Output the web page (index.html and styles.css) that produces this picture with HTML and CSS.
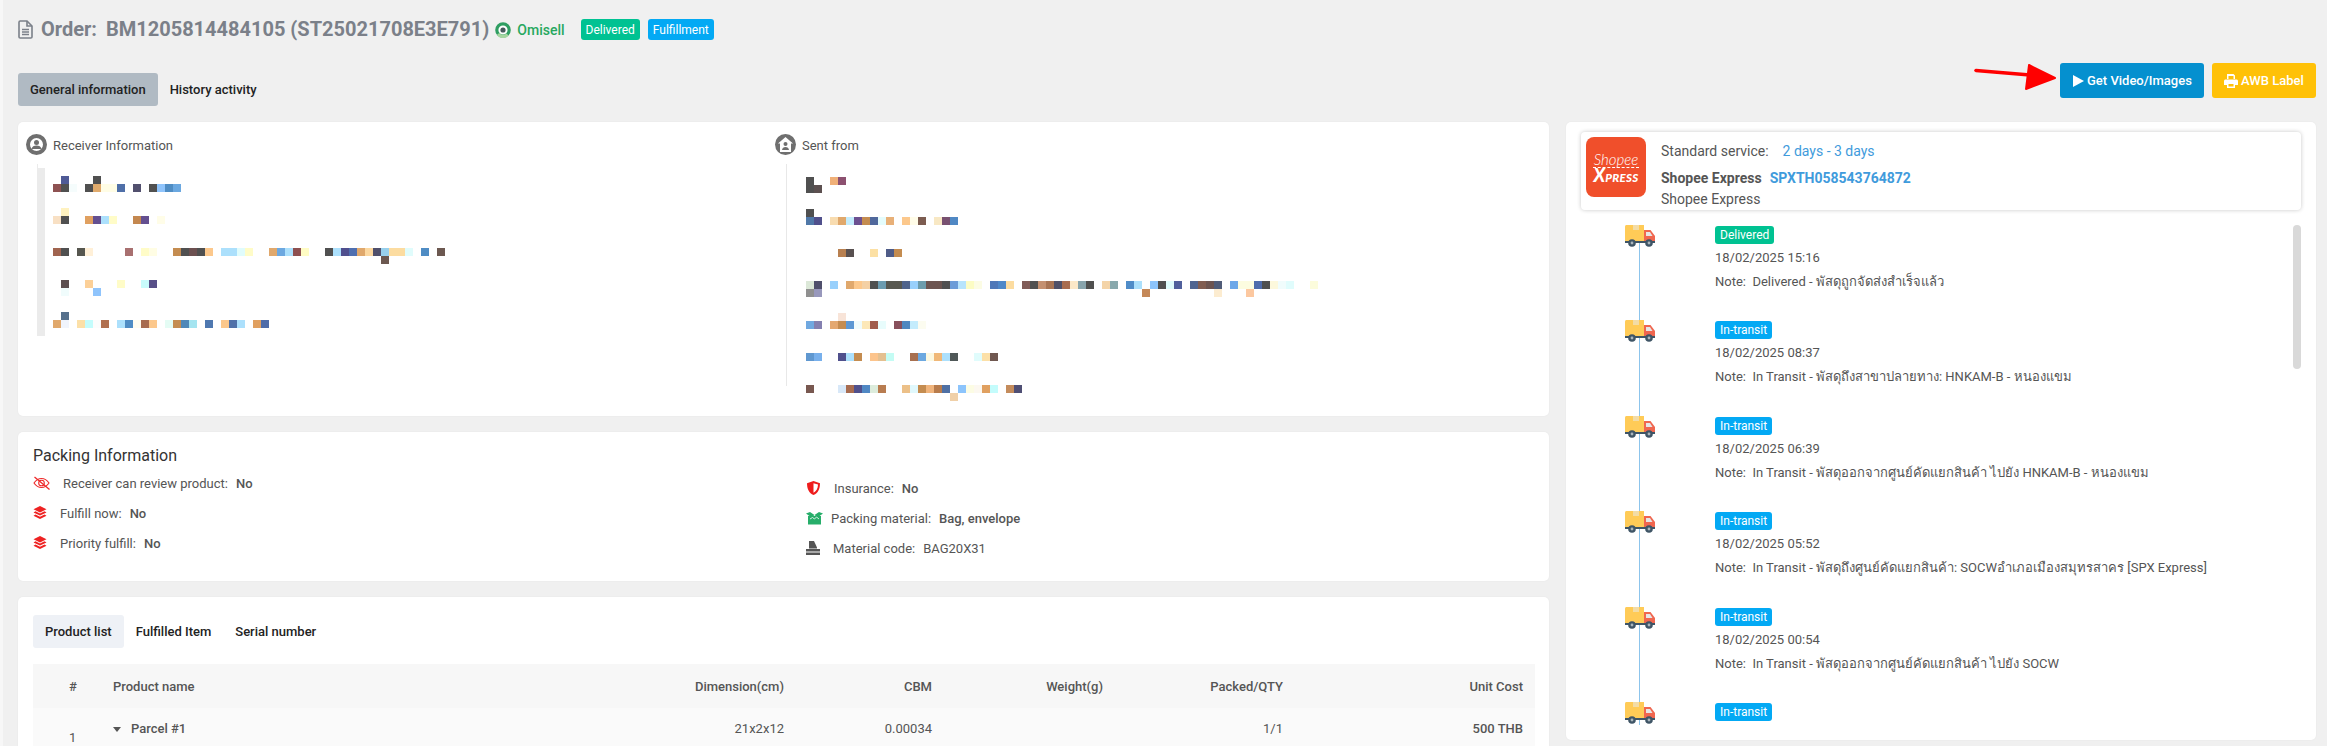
FILE: index.html
```html
<!DOCTYPE html>
<html lang="en">
<head>
<meta charset="utf-8">
<title>Order BM1205814484105</title>
<link rel="stylesheet" href="styles.css">
</head>
<body>
<main class="page">
  <header class="title-row">
    <svg class="doc-icon" viewBox="0 0 15 19"><path fill="none" stroke="#7b8089" stroke-width="1.6" d="M1 2.2C1 1.5 1.5 1 2.2 1H9l5 5v11c0 .6-.5 1-1.2 1H2.2C1.500 18 1 17.600 1 17z"/><path fill="none" stroke="#7b8089" stroke-width="1.600" d="M9 1v5h5M4 9.500h7M4 12h7M4 14.500h7"/></svg>
    <h1 class="order"><span class="order-label">Order:</span><span>BM1205814484105 (ST25021708E3E791)</span></h1>
    <svg class="omisell-logo" viewBox="0 0 16 16"><circle cx="8" cy="8" r="6.200" fill="#fff" stroke="#2f9e62" stroke-width="3.200"/><path fill="none" stroke="#a5d6a0" stroke-width="3.200" d="M3 12a6.200 6.200 0 0 0 9.500.5"/><circle cx="8" cy="8" r="2.600" fill="#46595c"/></svg>
    <span class="omisell">Omisell</span>
    <span class="badge green title-badge">Delivered</span>
    <span class="badge blue title-badge">Fulfillment</span>
  </header>

  <div class="toolbar">
    <nav class="tabs">
      <span class="tab active-main">General information</span>
      <span class="tab">History activity</span>
    </nav>
    <div class="actions">
      <svg class="arrow" viewBox="0 0 82 30"><path fill="none" stroke="#f00" stroke-width="3.500" stroke-linecap="round" d="M2 6.500 56 11"/><path fill="#f00" stroke="#f00" stroke-width="2" stroke-linejoin="round" d="M55 1 81 14 52 25z"/></svg>
      <button class="btn btn-blue"><svg class="btn-icon" viewBox="0 0 11 12"><path fill="#fff" d="M0 0l11 6-11 6z"/></svg>Get Video/Images</button>
      <button class="btn btn-yellow"><svg class="btn-icon printer" viewBox="0 0 14 14"><path fill="#fff" d="M3 0h6.500L11 1.500V5H9.500V2H4.500v3H3zM1.500 5.500h11c.8 0 1.500.7 1.500 1.500v4h-3v3H3v-3H0V7c0-.8.7-1.500 1.500-1.500zM4.500 10v2.500h5V10z"/></svg>AWB Label</button>
    </div>
  </div>

  <div class="columns">
    <section class="left">
      <article class="card addresses">
        <div class="address">
          <div class="addr-head">
            <svg class="addr-icon" viewBox="0 0 21 21"><circle cx="10.500" cy="10.500" r="8.500" fill="#fff" stroke="#6f6f6f" stroke-width="4"/><circle cx="10.500" cy="8.500" r="2.500" fill="#6f6f6f"/><path fill="#6f6f6f" d="M5.500 15c.5-2.500 2.500-3.500 5-3.500s4.500 1 5 3.500z"/></svg>
            <span>Receiver Information</span>
          </div>
          <svg class="mosaic receiver" viewBox="0 0 410 172">
            <path fill="#ebebeb" d="M0 0h1v4h7v168H0z"/>
            <g transform="translate(16 12)">
              <rect x="8" fill="#4f5a96"/><rect x="40" fill="#505050"/>
              <rect y="8" fill="#8e5252"/><rect x="8" y="8" fill="#505050"/><rect x="16" y="8" fill="#f5fcfc"/><rect x="32" y="8" fill="#505050"/><rect x="40" y="8" fill="#e0aa6c"/><rect x="48" y="8" fill="#fffde5"/><rect x="56" y="8" fill="#fffde5"/><rect x="64" y="8" fill="#4f6fa8"/><rect x="80" y="8" fill="#52506e"/><rect x="96" y="8" fill="#505050"/><rect x="104" y="8" fill="#8fc4fc"/><rect x="112" y="8" fill="#4f8dc4"/><rect x="120" y="8" fill="#6ba8e0"/>
              <rect x="8" y="32" fill="#fff2c0"/>
              <rect y="40" fill="#f8e0c4"/><rect x="8" y="40" fill="#505050"/><rect x="32" y="40" fill="#e0a060"/><rect x="40" y="40" fill="#644f90"/><rect x="48" y="40" fill="#ace0fc"/><rect x="56" y="40" fill="#fffcc8"/><rect x="80" y="40" fill="#c4884f"/><rect x="88" y="40" fill="#644f90"/><rect x="104" y="40" fill="#fffde8"/>
              <rect y="72" fill="#a0644f"/><rect x="8" y="72" fill="#505050"/><rect x="24" y="72" fill="#56564f"/><rect x="32" y="72" fill="#fff0d8"/><rect x="72" y="72" fill="#a87070"/><rect x="88" y="72" fill="#fffcc8"/><rect x="96" y="72" fill="#fffde4"/><rect x="120" y="72" fill="#c48c50"/><rect x="128" y="72" fill="#505050"/><rect x="136" y="72" fill="#6c5050"/><rect x="144" y="72" fill="#505050"/><rect x="152" y="72" fill="#fcc88c"/><rect x="168" y="72" fill="#ace0fc"/><rect x="176" y="72" fill="#ace0fc"/><rect x="184" y="72" fill="#e0fcfc"/><rect x="192" y="72" fill="#fffcc8"/><rect x="216" y="72" fill="#e0a86c"/><rect x="224" y="72" fill="#6ca8e0"/><rect x="232" y="72" fill="#ace0fc"/><rect x="240" y="72" fill="#8e5050"/><rect x="248" y="72" fill="#fffcc4"/><rect x="272" y="72" fill="#505050"/><rect x="280" y="72" fill="#ace0fc"/><rect x="288" y="72" fill="#504f8e"/><rect x="296" y="72" fill="#4f6fb0"/><rect x="304" y="72" fill="#e0a86c"/><rect x="312" y="72" fill="#fcd8a0"/><rect x="320" y="72" fill="#50506c"/><rect x="328" y="72" fill="#98d0ec"/><rect x="336" y="72" fill="#fcdca0"/><rect x="344" y="72" fill="#fcdca0"/><rect x="352" y="72" fill="#e0fcfc"/><rect x="368" y="72" fill="#4f8cc4"/><rect x="384" y="72" fill="#6c5850"/><rect x="328" y="80" fill="#6c5850"/>
              <rect x="8" y="104" fill="#5c4f50"/><rect x="32" y="104" fill="#fcd098"/><rect x="64" y="104" fill="#fffcc8"/><rect x="88" y="104" fill="#c8fcfc"/><rect x="96" y="104" fill="#584f88"/><rect x="8" y="112" fill="#f0fcfc"/><rect x="40" y="112" fill="#8fc4fc"/>
              <rect x="8" y="136" fill="#56708c"/>
              <rect y="144" fill="#e0a86c"/><rect x="8" y="144" fill="#f0f4fc"/><rect x="24" y="144" fill="#fce0a8"/><rect x="32" y="144" fill="#c4fcfc"/><rect x="40" y="144" fill="#fcfcfc"/><rect x="48" y="144" fill="#b07050"/><rect x="64" y="144" fill="#ace0fc"/><rect x="72" y="144" fill="#4f8cc4"/><rect x="80" y="144" fill="#fffcf0"/><rect x="88" y="144" fill="#a86c50"/><rect x="96" y="144" fill="#fcc88c"/><rect x="112" y="144" fill="#e4fcf4"/><rect x="120" y="144" fill="#c48c50"/><rect x="128" y="144" fill="#4f88b8"/><rect x="136" y="144" fill="#a4e4f0"/><rect x="152" y="144" fill="#4f78b0"/><rect x="168" y="144" fill="#fcc88c"/><rect x="176" y="144" fill="#4f70a8"/><rect x="184" y="144" fill="#ace0fc"/><rect x="200" y="144" fill="#e0a060"/><rect x="208" y="144" fill="#4f6ca8"/>
            </g>
          </svg>
        </div>
        <div class="address">
          <div class="addr-head">
            <svg class="addr-icon" viewBox="0 0 21 21"><circle cx="10.500" cy="10.500" r="10.500" fill="#6f6f6f"/><path fill="#fff" d="M10.500 3 18 9.500h-2V18H5V9.500H3z"/><circle cx="10.500" cy="10" r="2" fill="#6f6f6f"/><path fill="#6f6f6f" d="M7 16c.2-2 1.600-3 3.500-3s3.300 1 3.500 3z"/></svg>
            <span>Sent from</span>
          </div>
          <svg class="mosaic sender" viewBox="0 0 540 240">
            <path fill="#e8e8e8" d="M0 0h1v222H0z"/>
            <g transform="translate(20 13)">
              <rect fill="#505050"/><rect x="24" fill="#f0b078"/><rect x="32" fill="#8c5070"/><rect y="8" fill="#505050"/><rect x="8" y="8" fill="#5c5050"/>
              <rect y="32" fill="#505050"/>
              <rect y="40" fill="#5078a8"/><rect x="8" y="40" fill="#50508c"/><rect x="24" y="40" fill="#f8dcb0"/><rect x="32" y="40" fill="#e0a86c"/><rect x="40" y="40" fill="#c4ecfc"/><rect x="48" y="40" fill="#6c5090"/><rect x="56" y="40" fill="#c48c50"/><rect x="64" y="40" fill="#50689c"/><rect x="72" y="40" fill="#e4fcfc"/><rect x="80" y="40" fill="#e8b078"/><rect x="96" y="40" fill="#fcc88c"/><rect x="104" y="40" fill="#fffce8"/><rect x="112" y="40" fill="#7c5c50"/><rect x="128" y="40" fill="#f8e8c4"/><rect x="136" y="40" fill="#785070"/><rect x="144" y="40" fill="#5088c4"/>
              <rect x="32" y="72" fill="#b88050"/><rect x="40" y="72" fill="#585050"/><rect x="64" y="72" fill="#fce0a4"/><rect x="80" y="72" fill="#4f5c88"/><rect x="88" y="72" fill="#c48c50"/>
              <rect y="104" fill="#dce8d8"/><rect x="8" y="104" fill="#50506c"/><rect x="24" y="104" fill="#98d0fc"/><rect x="40" y="104" fill="#e0a86c"/><rect x="48" y="104" fill="#fcc88c"/><rect x="56" y="104" fill="#f4d0a4"/><rect x="64" y="104" fill="#505050"/><rect x="72" y="104" fill="#6c9cb0"/><rect x="80" y="104" fill="#585850"/><rect x="88" y="104" fill="#585850"/><rect x="96" y="104" fill="#50648c"/><rect x="104" y="104" fill="#98d0fc"/><rect x="112" y="104" fill="#6c9cac"/><rect x="120" y="104" fill="#6c5450"/><rect x="128" y="104" fill="#6c5450"/><rect x="136" y="104" fill="#505050"/><rect x="144" y="104" fill="#6c9cd8"/><rect x="152" y="104" fill="#b8e4fc"/><rect x="160" y="104" fill="#fcfcc4"/><rect x="168" y="104" fill="#fcfce4"/><rect x="184" y="104" fill="#4f78b8"/><rect x="192" y="104" fill="#4f88c8"/><rect x="200" y="104" fill="#fcdca0"/><rect x="216" y="104" fill="#805c58"/><rect x="224" y="104" fill="#505050"/><rect x="232" y="104" fill="#c49070"/><rect x="240" y="104" fill="#a87454"/><rect x="248" y="104" fill="#4f5068"/><rect x="256" y="104" fill="#a86c4f"/><rect x="264" y="104" fill="#fce8c8"/><rect x="272" y="104" fill="#88a4ac"/><rect x="280" y="104" fill="#50504f"/><rect x="296" y="104" fill="#f4d4a8"/><rect x="304" y="104" fill="#88a8ac"/><rect x="320" y="104" fill="#4f8cc8"/><rect x="328" y="104" fill="#ace0fc"/><rect x="344" y="104" fill="#8cc4fc"/><rect x="352" y="104" fill="#505050"/><rect x="360" y="104" fill="#e0fcfc"/><rect x="368" y="104" fill="#50609c"/><rect x="384" y="104" fill="#4f6490"/><rect x="392" y="104" fill="#805c50"/><rect x="400" y="104" fill="#6c5450"/><rect x="408" y="104" fill="#505c78"/><rect x="424" y="104" fill="#6ca8e8"/><rect x="432" y="104" fill="#fcfce0"/><rect x="440" y="104" fill="#fcfce0"/><rect x="448" y="104" fill="#4f6cac"/><rect x="456" y="104" fill="#505050"/><rect x="464" y="104" fill="#fcf8dc"/><rect x="472" y="104" fill="#f0fcfc"/><rect x="480" y="104" fill="#e0fcfc"/><rect x="504" y="104" fill="#fcfcdc"/>
              <rect y="112" fill="#909090"/><rect x="8" y="112" fill="#9898bc"/><rect x="336" y="112" fill="#c48858"/><rect x="408" y="112" fill="#fcecd0"/><rect x="440" y="112" fill="#fcc8a0"/>
              <rect x="32" y="136" fill="#f8e4d8"/>
              <rect y="144" fill="#70a8e0"/><rect x="8" y="144" fill="#8480b0"/><rect x="24" y="144" fill="#e4a870"/><rect x="32" y="144" fill="#c48c50"/><rect x="40" y="144" fill="#5c98d4"/><rect x="48" y="144" fill="#f0fcfc"/><rect x="56" y="144" fill="#fce8b8"/><rect x="64" y="144" fill="#a05c4c"/><rect x="72" y="144" fill="#e8fcfc"/><rect x="88" y="144" fill="#88505c"/><rect x="96" y="144" fill="#5088c0"/><rect x="104" y="144" fill="#c4ecfc"/><rect x="112" y="144" fill="#fcfcf0"/>
              <rect y="176" fill="#6098d0"/><rect x="8" y="176" fill="#78b0ec"/><rect x="32" y="176" fill="#50508c"/><rect x="40" y="176" fill="#ace0fc"/><rect x="48" y="176" fill="#c48c50"/><rect x="64" y="176" fill="#fcc48c"/><rect x="72" y="176" fill="#e4c090"/><rect x="80" y="176" fill="#c4fcf4"/><rect x="104" y="176" fill="#a87050"/><rect x="112" y="176" fill="#6ca8e0"/><rect x="120" y="176" fill="#fcf8e0"/><rect x="128" y="176" fill="#f0b878"/><rect x="136" y="176" fill="#ace0fc"/><rect x="144" y="176" fill="#4f5858"/><rect x="168" y="176" fill="#e0fcfc"/><rect x="176" y="176" fill="#fce0a8"/><rect x="184" y="176" fill="#705850"/>
              <rect y="208" fill="#785850"/><rect x="32" y="208" fill="#d8e8f8"/><rect x="40" y="208" fill="#a86c50"/><rect x="48" y="208" fill="#50508c"/><rect x="56" y="208" fill="#5088c4"/><rect x="64" y="208" fill="#dcecdc"/><rect x="72" y="208" fill="#b87c50"/><rect x="96" y="208" fill="#ecc088"/><rect x="104" y="208" fill="#e0f8fc"/><rect x="112" y="208" fill="#c48c50"/><rect x="120" y="208" fill="#f0b47c"/><rect x="128" y="208" fill="#b87c4c"/><rect x="136" y="208" fill="#4f70a4"/><rect x="152" y="208" fill="#8cc4fc"/><rect x="160" y="208" fill="#fcfce4"/><rect x="168" y="208" fill="#fcf8f0"/><rect x="176" y="208" fill="#e0a060"/><rect x="184" y="208" fill="#c4fcfc"/><rect x="200" y="208" fill="#c48c5c"/><rect x="208" y="208" fill="#4f4f74"/><rect x="144" y="216" fill="#f0d0a8"/>
            </g>
          </svg>
        </div>
      </article>

      <article class="card packing">
        <h2 class="packing-title">Packing Information</h2>
        <div class="packing-grid">
          <ul class="facts">
            <li class="fact"><svg class="fact-icon eye" viewBox="0 0 17 14"><g fill="none" stroke="#ee2a2a" stroke-width="1.100"><path d="M1 7c2-3 4.500-4.500 7.500-4.500S14 4 16 7c-2 3-4.500 4.500-7.500 4.500S3 10 1 7z"/><circle cx="8.500" cy="7" r="2.800"/><path stroke-width="1.300" d="M1.500 1l15 12.500"/></g></svg><span class="fact-label">Receiver can review product:</span><b>No</b></li>
            <li class="fact"><svg class="fact-icon layers" viewBox="0 0 14 14"><path fill="#ee2222" d="M7 0l6.500 3.200L7 6.400.5 3.200z"/><path fill="#ee2222" d="M2.500 5.200L7 7.400l4.500-2.200 2 1.200L7 9.600.5 6.400z"/><path fill="#ee2222" d="M2.500 8.500L7 10.700l4.500-2.200 2 1.200L7 13 .5 9.700z"/></svg><span class="fact-label">Fulfill now:</span><b>No</b></li>
            <li class="fact"><svg class="fact-icon layers" viewBox="0 0 14 14"><path fill="#ee2222" d="M7 0l6.500 3.200L7 6.400.5 3.200z"/><path fill="#ee2222" d="M2.500 5.200L7 7.400l4.500-2.200 2 1.200L7 9.600.5 6.400z"/><path fill="#ee2222" d="M2.500 8.500L7 10.700l4.500-2.200 2 1.200L7 13 .5 9.700z"/></svg><span class="fact-label">Priority fulfill:</span><b>No</b></li>
          </ul>
          <ul class="facts facts-right">
            <li class="fact"><svg class="fact-icon shield" viewBox="0 0 13 14"><path fill="#ee1c1c" d="M6.500 0L13 2.200C13 8 11 12 6.500 14 2 12 0 8 0 2.200z"/><path fill="#fff" d="M6.500 2.200L11 3.600c-.1 3.800-1.500 6.800-4.500 8.200z"/></svg><span class="fact-label">Insurance:</span><b>No</b></li>
            <li class="fact"><svg class="fact-icon box" viewBox="0 0 17 13"><path fill="#27ae6a" d="M2 4h13v8.500H2z"/><path fill="#27ae6a" d="M0 1.500L4 0l4.500 3-3 2.500zM17 1.500L13 0 8.500 3l3 2.500z"/><path fill="none" stroke="#fff" stroke-width=".8" d="M4 7l2.500-1.500L8.500 7l2-2 2.500 2"/></svg><span class="fact-label">Packing material:</span><b>Bag, envelope</b></li>
            <li class="fact"><svg class="fact-icon tray" viewBox="0 0 14 14"><path fill="#555" d="M3 0h5l3 6.500v1H3z"/><path fill="#555" d="M0 8h14v2.500H0zM0 11.500h14V14H0z"/></svg><span class="fact-label">Material code:</span><span class="plain">BAG20X31</span></li>
          </ul>
        </div>
      </article>

      <article class="card products">
        <nav class="tabs sub-tabs">
          <span class="tab active-sub">Product list</span>
          <span class="tab">Fulfilled Item</span>
          <span class="tab">Serial number</span>
        </nav>
        <table class="table">
          <colgroup><col class="c-idx"><col class="c-name"><col class="c-dim"><col class="c-cbm"><col class="c-wt"><col class="c-qty"><col class="c-cost"></colgroup>
          <thead>
            <tr><th class="idx">#</th><th class="name">Product name</th><th>Dimension(cm)</th><th>CBM</th><th>Weight(g)</th><th>Packed/QTY</th><th>Unit Cost</th></tr>
          </thead>
          <tbody>
            <tr>
              <td class="idx idx-cell">1</td>
              <td class="name"><div class="parcel"><span class="caret"></span>Parcel #1</div><div class="sku">SKU</div></td>
              <td>21x2x12</td><td>0.00034</td><td></td><td>1/1</td><td class="cost">500 THB</td>
            </tr>
          </tbody>
        </table>
      </article>
    </section>

    <aside class="card tracking">
      <div class="service">
        <div class="logo"><span class="logo-top">Shopee</span><span class="logo-bot"><span class="logo-x">X</span>PRESS</span></div>
        <div class="service-text">
          <p class="line-a"><span>Standard service:</span><span class="link">2 days - 3 days</span></p>
          <p class="line-b"><b>Shopee Express</b><b class="link-b">SPXTH058543764872</b></p>
          <p class="line-c">Shopee Express</p>
        </div>
      </div>
      <div class="timeline">
        <div class="rail"></div>
        <div class="thumb"></div>
        <div class="event">
          <svg class="truck" viewBox="0 0 30 22"><use href="#truck"/></svg>
          <div class="event-body"><span class="badge green ev-badge">Delivered</span><p class="ev-date">18/02/2025 15:16</p><p class="ev-note">Note:&nbsp; Delivered - พัสดุถูกจัดส่งสำเร็จแล้ว</p></div>
        </div>
        <div class="event">
          <svg class="truck" viewBox="0 0 30 22"><use href="#truck"/></svg>
          <div class="event-body"><span class="badge blue ev-badge">In-transit</span><p class="ev-date">18/02/2025 08:37</p><p class="ev-note">Note:&nbsp; In Transit - พัสดุถึงสาขาปลายทาง: HNKAM-B - หนองแขม</p></div>
        </div>
        <div class="event">
          <svg class="truck" viewBox="0 0 30 22"><use href="#truck"/></svg>
          <div class="event-body"><span class="badge blue ev-badge">In-transit</span><p class="ev-date">18/02/2025 06:39</p><p class="ev-note">Note:&nbsp; In Transit - พัสดุออกจากศูนย์คัดแยกสินค้า ไปยัง HNKAM-B - หนองแขม</p></div>
        </div>
        <div class="event">
          <svg class="truck" viewBox="0 0 30 22"><use href="#truck"/></svg>
          <div class="event-body"><span class="badge blue ev-badge">In-transit</span><p class="ev-date">18/02/2025 05:52</p><p class="ev-note">Note:&nbsp; In Transit - พัสดุถึงศูนย์คัดแยกสินค้า: SOCWอำเภอเมืองสมุทรสาคร [SPX Express]</p></div>
        </div>
        <div class="event">
          <svg class="truck" viewBox="0 0 30 22"><use href="#truck"/></svg>
          <div class="event-body"><span class="badge blue ev-badge">In-transit</span><p class="ev-date">18/02/2025 00:54</p><p class="ev-note">Note:&nbsp; In Transit - พัสดุออกจากศูนย์คัดแยกสินค้า ไปยัง SOCW</p></div>
        </div>
        <div class="event">
          <svg class="truck" viewBox="0 0 30 22"><use href="#truck"/></svg>
          <div class="event-body"><span class="badge blue ev-badge">In-transit</span></div>
        </div>
      </div>
    </aside>
  </div>
</main>
<svg class="defs" aria-hidden="true"><defs><g id="truck">
  <path fill="#ffcb57" d="M1.500 0H19v17H0V1.500C0 .7.700 0 1.500 0z"/>
  <path fill="#f3dca6" d="M8 0h6v5H8z"/>
  <path fill="#f0664f" d="M19 5h6.500L30 11v6H19z"/>
  <path fill="#e6e6e6" d="M21 7h4l2.500 4H21z"/>
  <path fill="#3f5566" d="M0 16h30v2H0z"/>
  <circle cx="7" cy="18" r="3.800" fill="#3f5566"/><circle cx="7" cy="18" r="1.400" fill="#a9b4bb"/>
  <circle cx="24" cy="18" r="3.800" fill="#3f5566"/><circle cx="24" cy="18" r="1.400" fill="#a9b4bb"/>
</g></defs></svg>
</body>
</html>
```
FILE: styles.css
```css
* { box-sizing: border-box; }
html, body { margin: 0; height: 746px; overflow: hidden; }
body { background: #f0f0f0; border-left: 3px solid #f7f7f7; font-family: Roboto, "Noto Sans", sans-serif; font-size: 13px; color: #555; }
p, h1, h2, ul { margin: 0; padding: 0; }
ul { list-style: none; }
.defs { width: 0; height: 0; position: absolute; }

.page { padding: 19px 11px 0 15px; }

.title-row { display: flex; align-items: center; height: 21px; }
.doc-icon { width: 15px; height: 19px; }
.order { display: flex; gap: 9px; margin-left: 8px; font-size: 20px; line-height: 21px; font-weight: 700; color: #7b8089; white-space: nowrap; }
.omisell-logo { width: 16px; height: 16px; margin-left: 6px; }
.omisell { margin-left: 6px; font-size: 14px; font-weight: 500; color: #27a85f; }
.badge { display: inline-flex; align-items: center; justify-content: center; border-radius: 3px; color: #fff; font-size: 12px; padding: 0 5px; }
.green { background: #00c292; }
.blue { background: #03a9f4; }
.title-badge { height: 21px; margin-left: 8px; }
.omisell + .title-badge { margin-left: 16px; }

.toolbar { display: flex; justify-content: space-between; height: 43px; margin-top: 23px; }
.tabs { display: flex; align-self: flex-end; font-weight: 500; color: #222; }
.tab { display: flex; align-items: center; height: 33px; padding: 0 12px; border-radius: 3px; }
.active-main { background: #b0bac3; }
.actions { display: flex; gap: 8px; position: relative; }
.btn { display: flex; align-items: center; height: 35px; border: 0; border-radius: 3px; color: #fff; font: 500 13px Roboto, sans-serif; }
.btn-blue { width: 144px; padding-left: 13px; background: #0590cf; }
.btn-yellow { width: 104px; padding-left: 12px; background: #ffc107; }
.btn-icon { width: 11px; height: 12px; margin-right: 3px; }
.printer { width: 14px; height: 14px; margin-right: 3px; }
.arrow { position: absolute; left: -86px; top: 1px; width: 82px; height: 30px; }

.columns { display: grid; grid-template-columns: 1531px 750px; gap: 17px; margin-top: 16px; }
.left { display: flex; flex-direction: column; gap: 16px; }
.card { background: #fff; border-radius: 5px; box-shadow: 0 0 2px rgba(0, 0, 0, .05); }

.addresses { display: grid; grid-template-columns: 749px 1fr; height: 294px; padding: 12px 8px 0; }
.addr-head { display: flex; align-items: center; gap: 6px; height: 21px; font-size: 13px; }
.addr-head span { padding-top: 2px; }
.addr-icon { width: 21px; height: 21px; }
.mosaic { display: block; margin: 9px 0 0 11px; }
.mosaic rect { width: 8px; height: 8px; }
.receiver { width: 410px; height: 172px; }
.sender { width: 540px; height: 240px; }

.packing { height: 149px; padding: 14px 15px 0; }
.packing-title { font-size: 16px; font-weight: 400; color: #333; line-height: 20px; }
.packing-grid { display: grid; grid-template-columns: 773px 1fr; margin-top: 7px; }
.facts { display: flex; flex-direction: column; gap: 9.500px; }
.facts-right { padding-top: 5px; }
.fact { display: flex; align-items: center; height: 20.500px; white-space: nowrap; }
.fact b { margin-left: 8px; font-weight: 500; }
.fact-icon { flex: none; }
.eye { width: 17px; height: 14px; margin-right: 13px; }
.layers { width: 14px; height: 14px; margin-right: 13px; }
.shield { width: 13px; height: 14px; margin: 0 14px 0 1px; }
.box { width: 17px; height: 13px; margin-right: 8px; }
.tray { width: 14px; height: 14px; margin-right: 13px; }
.plain { margin-left: 8px; }

.products { height: 400px; padding: 18px 14px 0 15px; }
.sub-tabs { align-self: auto; }
.active-sub { background: #eef1f6; }
.table { width: 1502px; margin-top: 16px; border-collapse: collapse; table-layout: fixed; }
.c-idx { width: 68px; }
.c-name { width: 545px; }
.c-dim { width: 150px; }
.c-cbm { width: 148px; }
.c-wt { width: 171px; }
.c-qty { width: 180px; }
.c-cost { width: 240px; }
.table th { height: 44px; padding: 0 12px; background: #f7f7f7; font-weight: 500; text-align: right; color: #555; }
.table td { height: 60px; padding: 12px 12px 0; background: #fafafa; line-height: 18px; text-align: right; vertical-align: top; color: #555; }
.table .idx { padding: 0 0 0 36px; text-align: left; }
.table .idx-cell { padding-top: 21px; }
.table .name { text-align: left; }
.table .cost { font-weight: 500; }
.parcel { display: flex; align-items: center; gap: 10px; font-weight: 500; }
.sku { margin: 6px 0 0 18px; font-weight: 500; }
.caret { border: 4px solid transparent; border-top: 5px solid #555; border-bottom: 0; }

.tracking { position: relative; height: 618px; padding: 10px 15px 0; }
.service { display: flex; gap: 15px; height: 78px; padding: 5px; background: #fff; border-radius: 4px; box-shadow: 0 0 4px rgba(0, 0, 0, .22); }
.logo { display: flex; flex-direction: column; align-items: center; width: 60px; height: 60px; padding-top: 14px; border-radius: 8px; background: #f04f2b; color: #fff; font-family: Lato, sans-serif; }
.logo-top { font-size: 15px; line-height: 16px; font-weight: 300; font-style: italic; }
.logo-bot { font-size: 11.500px; line-height: 15px; font-weight: 900; font-style: italic; letter-spacing: .3px; border-top: 1px dashed #fff; }
.logo-x { font-size: 18px; }
.service-text { font-size: 14px; line-height: 21px; }
.line-a { display: flex; gap: 14px; margin-top: 4px; }
.link { color: #3f9bdc; }
.line-b { display: flex; gap: 8px; margin-top: 6px; }
.line-b b { font-weight: 700; }
.link-b { color: #3f9bdc; }

.timeline { position: relative; height: 515px; padding-top: 15px; overflow: hidden; }
.rail { position: absolute; left: 58px; top: 30px; bottom: 0; width: 1px; background: #8cc4ec; }
.thumb { position: absolute; right: 0; top: 15px; width: 8px; height: 144px; border-radius: 4px; background: #d9d9d9; }
.event { position: relative; display: flex; height: 95.400px; padding-left: 44px; }
.truck { width: 30px; height: 22px; flex: none; margin-right: 60px; }
.event-body { padding-top: 1px; }
.ev-badge { height: 18px; }
.ev-date { margin-top: 5px; line-height: 18px; }
.ev-note { margin-top: 4px; line-height: 22px; }
```
